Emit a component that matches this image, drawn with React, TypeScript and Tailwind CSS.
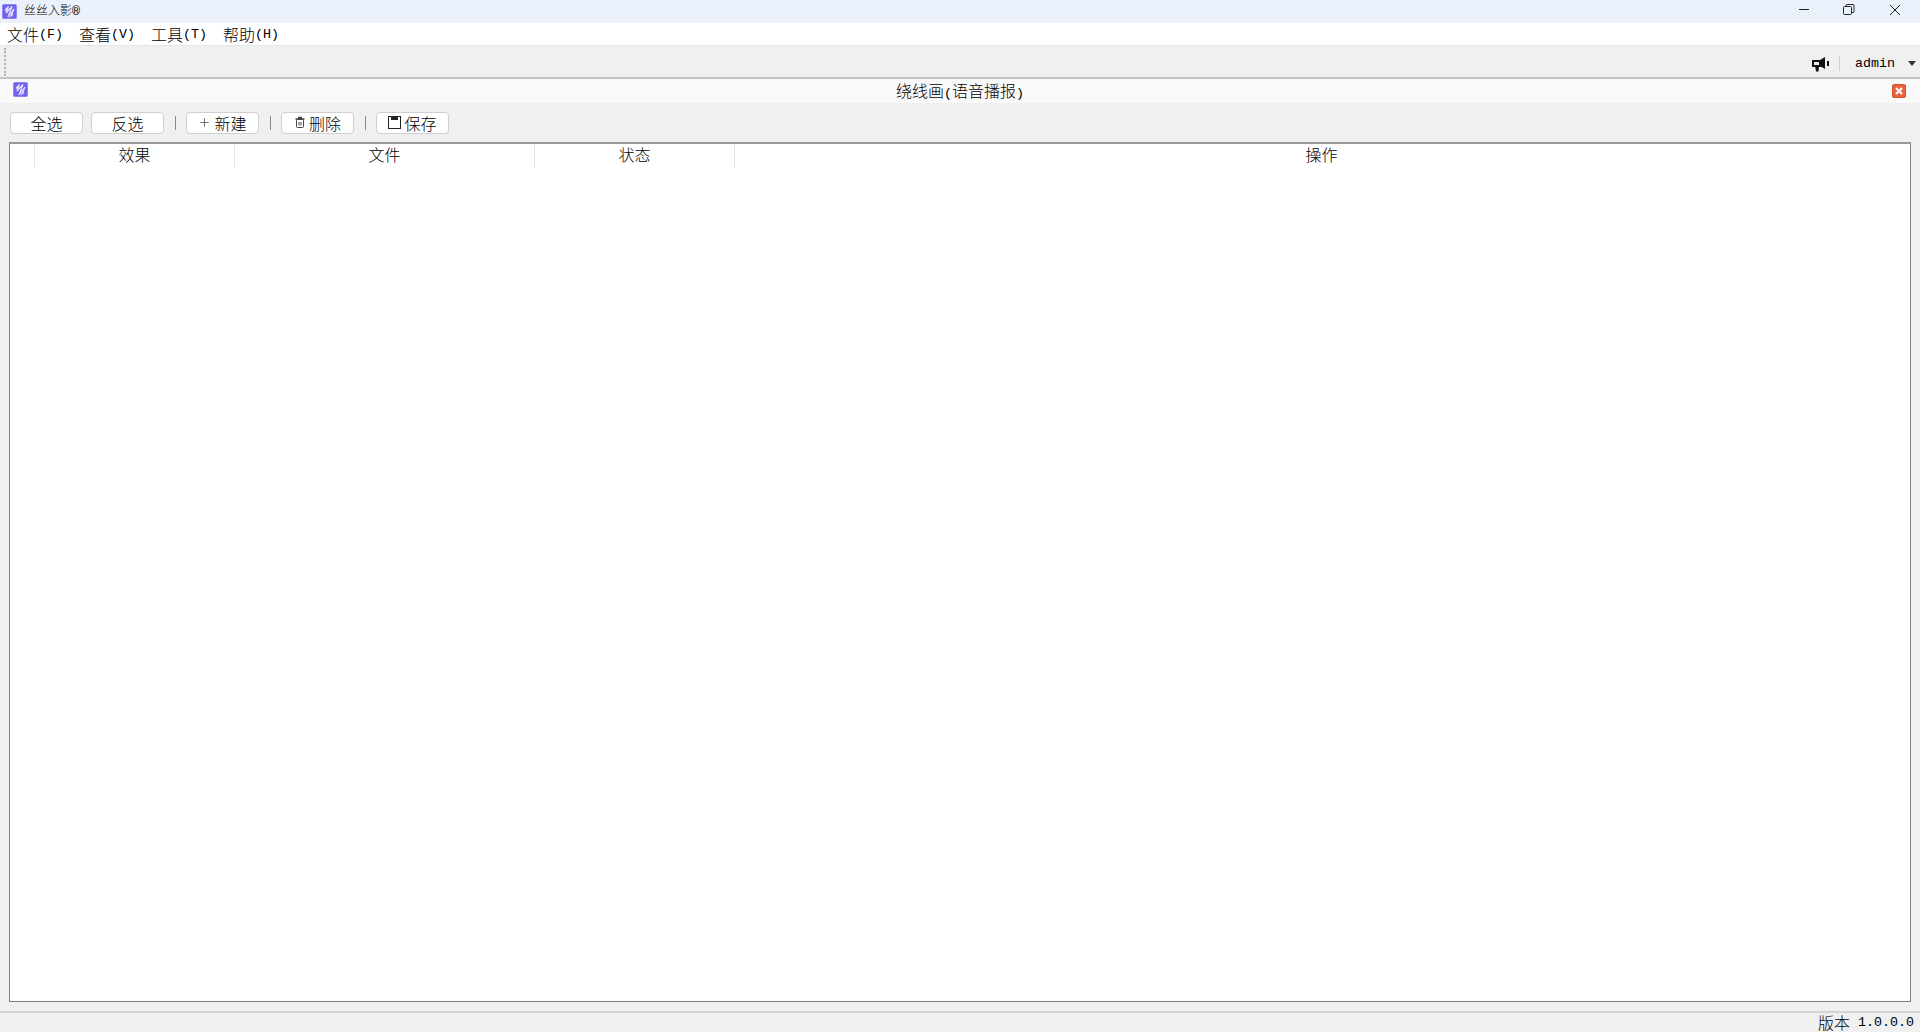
import React from 'react';
import { Plus } from 'lucide-react';

const cjk = "font-['Noto_Sans_CJK_SC','Liberation_Mono',monospace]";

// half-width latin chars, like the bitmap font of the desktop app
const Latin: React.FC<{ children: React.ReactNode; className?: string }> = ({ children, className }) => (
  <span className={`font-['Liberation_Mono',monospace] text-[13.33px] ${className ?? ''}`}>{children}</span>
);

const Logo: React.FC<{ size: number; className?: string }> = ({ size, className }) => (
  <svg width={size} height={size} viewBox="0 0 15 15" className={`shrink-0 ${className ?? ''}`}>
    <rect x="0.5" y="0.5" width="14" height="14" rx="1" fill="#6f62ee" stroke="#8f86f2" />
    <path d="M3 6.5 L6.5 2.5 L4 9 L10 2.5 L6 13 L12 5 L9 12 L11 10.5" fill="none" stroke="#e4e0ff" strokeWidth="1.2" />
  </svg>
);

const MenuItem: React.FC<{ label: string; hotkey: string }> = ({ label, hotkey }) => (
  <div className="flex items-center w-[72px] leading-[22px] whitespace-nowrap">
    <span>{label}</span>
    <Latin className="pt-[2px]">({hotkey})</Latin>
  </div>
);

const Button: React.FC<{ icon?: React.ReactNode; children: React.ReactNode }> = ({ icon, children }) => (
  <button className="flex items-center justify-center gap-[3px] w-[73px] h-[22px] bg-white border border-[#cfcfcf] rounded-[4px] text-[16px] leading-none text-black">
    {icon}
    <span>{children}</span>
  </button>
);

const Sep = () => <div className="w-px h-[14px] ml-[11px] mr-[10px] bg-[#8c8c8c]" />;

const TrashIcon = () => (
  <svg width="12" height="13" viewBox="0 0 12 13" fill="none" stroke="#444" strokeWidth="1">
    <path d="M4 1.5 H8 M1.5 3 H10.5" strokeWidth="1.6" />
    <rect x="2.5" y="3.5" width="7" height="8" rx="1" />
    <path d="M5 6 V9.5 M7 6 V9.5" />
  </svg>
);

const SaveIcon = () => (
  <svg width="13" height="13" viewBox="0 0 13 13" fill="none" stroke="#222" strokeWidth="1">
    <rect x="0.5" y="0.5" width="12" height="12" />
    <rect x="3" y="1" width="7" height="3" fill="#222" stroke="none" />
  </svg>
);

const App: React.FC = () => {
  const columns = ['', '效果', '文件', '状态', '操作'];

  return (
    <div className={`flex flex-col w-[1920px] h-[1032px] overflow-hidden bg-[#f0f0f0] text-black text-[16px] font-light ${cjk}`}>
      {/* window title */}
      <div className="flex items-center h-[23px] bg-[#ebf1fa] pl-[2px]">
        <Logo size={15} />
        <span className="ml-[7px] text-[12px] leading-none">
          丝丝入影<Latin>®</Latin>
        </span>
        <div className="ml-auto flex items-center h-full pb-[3px]">
          <svg width="12" height="12" viewBox="0 0 12 12" className="mr-[33px]" stroke="#222" fill="none">
            <path d="M1 5.5 H11" />
          </svg>
          <svg width="12" height="12" viewBox="0 0 12 12" className="mr-[34px]" stroke="#222" fill="none">
            <rect x="0.5" y="2.5" width="8" height="8" rx="1" />
            <path d="M3 2.5 V1.5 Q3 0.5 4 0.5 H10 Q11 0.5 11 1.5 V7.5 Q11 8.5 10 8.5 H8.5" />
          </svg>
          <svg width="12" height="12" viewBox="0 0 12 12" className="mr-[19px]" stroke="#222" fill="none">
            <path d="M1 1 L11 11 M11 1 L1 11" />
          </svg>
        </div>
      </div>

      {/* menu bar */}
      <div className="flex items-center h-[22px] bg-white pl-[7px]">
        <MenuItem label="文件" hotkey="F" />
        <MenuItem label="查看" hotkey="V" />
        <MenuItem label="工具" hotkey="T" />
        <MenuItem label="帮助" hotkey="H" />
      </div>

      {/* tool bar */}
      <div className="flex items-center h-[34px] bg-[#f0f0f0] border-t border-t-[#e6e6e6] border-b-2 border-b-[#c4c4c4] pl-[4px]">
        <div className="w-[2px] h-[28px] border-l-2 border-dotted border-[#b0b0b0]" />
        <div className="ml-auto flex items-center h-full pt-[4px]">
          <svg width="18" height="16" viewBox="0 0 18 16" className="mr-[9px]">
            <rect x="1" y="5" width="7" height="5" fill="none" stroke="#111" strokeWidth="2" />
            <path d="M8 4 L13 1 V13 L8 10 Z" fill="#111" />
            <path d="M3 10 H7 L6.5 15.5 H4 Z" fill="#111" />
            <rect x="15" y="5" width="2" height="5" fill="#111" />
          </svg>
          <div className="w-px h-[15px] bg-[#d0d0d0]" />
          <Latin className="ml-[15px]">admin</Latin>
          <svg width="8" height="5" viewBox="0 0 8 5" className="ml-[13px] mr-[4px]">
            <path d="M0 0 H8 L4 5 Z" fill="#333" />
          </svg>
        </div>
      </div>

      {/* sub window title */}
      <div className="flex items-center justify-between h-[24px] bg-[#f9f9f9] pl-[13px] pr-[14px]">
        <Logo size={15} className="mb-[3px]" />
        <span className="leading-none">
          绕线画<Latin>(</Latin>语音播报<Latin>)</Latin>
        </span>
        <div className="flex items-center justify-center w-[14px] h-[14px] bg-[#e9633f] rounded-[2px] border border-[#d2532f]">
          <svg width="8" height="8" viewBox="0 0 8 8" stroke="#fff" strokeWidth="2">
            <path d="M1 1 L7 7 M7 1 L1 7" />
          </svg>
        </div>
      </div>

      {/* actions */}
      <div className="flex items-center h-[39px] pl-[10px]">
        <Button>全选</Button>
        <div className="w-[8px]" />
        <Button>反选</Button>
        <Sep />
        <Button icon={<Plus size={13} strokeWidth={1.5} color="#555" />}>新建</Button>
        <Sep />
        <Button icon={<TrashIcon />}>删除</Button>
        <Sep />
        <Button icon={<SaveIcon />}>保存</Button>
      </div>

      {/* table */}
      <div className="mx-[9px] h-[860px] bg-white border border-[#7f7f7f] border-t-2 border-t-[#9a9a9a]">
        <div className="grid grid-cols-[25px_200px_300px_200px_1fr] h-[24px]">
          {columns.map((col, i) => (
            <div
              key={i}
              className="flex items-center justify-center pb-[4px] border-r border-[#e5e5e5] last:border-r-0 last:pr-[2px] leading-none"
            >
              {col}
            </div>
          ))}
        </div>
      </div>

      {/* status bar */}
      <div className="mt-[9px] flex items-center justify-end flex-1 border-t-2 border-[#d4d4d4] pr-[6px] pb-[2px] leading-none">
        <span>版本</span>
        <Latin className="ml-[8px] pt-[2px]">1.0.0.0</Latin>
      </div>
    </div>
  );
};

export default App;
